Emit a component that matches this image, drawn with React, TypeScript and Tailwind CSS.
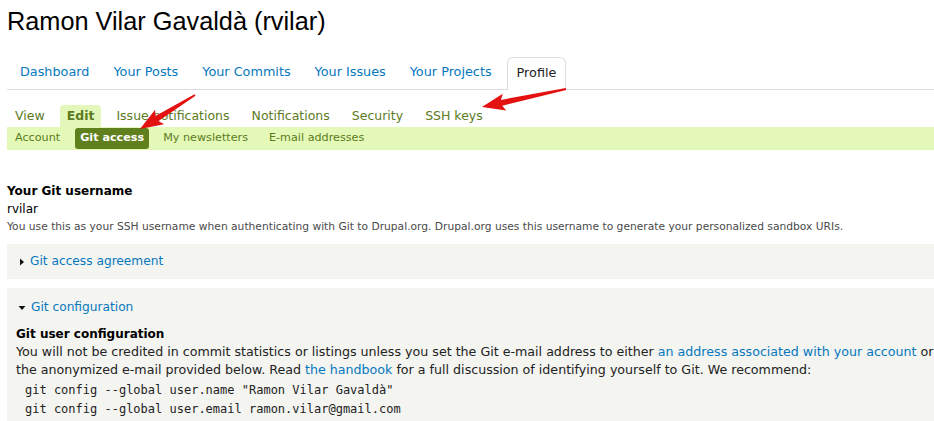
import React from "react";

const mainTabs = ["Dashboard", "Your Posts", "Your Commits", "Your Issues", "Your Projects"];
const subTabs = ["Issue notifications", "Notifications", "Security", "SSH keys"];
const subSubTabs = ["My newsletters", "E-mail addresses"];

// red annotation arrow: tapered shaft + head, from tail (x1,y1) to tip (x2,y2)
function arrowPoints(x1: number, y1: number, x2: number, y2: number) {
  const dx = x2 - x1;
  const dy = y2 - y1;
  const len = Math.hypot(dx, dy);
  const ux = dx / len;
  const uy = dy / len;
  const nx = -uy;
  const ny = ux;
  const headLen = 20;
  const headW = 8.5;
  const bx = x2 - ux * headLen;
  const by = y2 - uy * headLen;
  const pts = [
    [x1 + nx * 0.9, y1 + ny * 0.9],
    [bx + nx * 3, by + ny * 3],
    [bx + nx * headW - ux * 3, by + ny * headW - uy * 3],
    [x2, y2],
    [bx - nx * headW - ux * 3, by - ny * headW - uy * 3],
    [bx - nx * 3, by - ny * 3],
    [x1 - nx * 0.9, y1 - ny * 0.9],
  ];
  return pts.map((p) => p.join(",")).join(" ");
}

const App = () => {
  return (
    <div className="relative w-[934px] h-[421px] overflow-hidden bg-white pl-[7px] font-['DejaVu_Sans',sans-serif] text-[#222]">
      <h1 className="pt-[6px] text-[25.3px] leading-[30px] font-normal text-black font-['Liberation_Sans',Arial,sans-serif]">
        Ramon Vilar Gavaldà (rvilar)
      </h1>

      {/* primary tabs */}
      <ul className="mt-[21px] flex items-end gap-[6px] pl-[4px] border-b border-[#dcdcdc] text-[12.8px]">
        {mainTabs.map((t) => (
          <li key={t} className="h-[32px] flex items-center px-[9px] pb-[3px] text-[#0678be]">
            {t}
          </li>
        ))}
        <li className="h-[33px] -mb-px flex items-center px-[9px] pb-[3px] bg-white border border-b-0 border-[#dcdcdc] rounded-t-[6px] text-[#222]">
          Profile
        </li>
      </ul>

      {/* secondary tabs */}
      <ul className="mt-[15px] flex items-end gap-[8px] text-[12.5px] text-[#5b7b1c]">
        <li className="h-[22px] flex items-center ml-[1px] px-[7px]">View</li>
        <li className="h-[22px] flex items-center px-[7px] bg-[#e3f7bb] rounded-t-[4px] font-bold">Edit</li>
        {subTabs.map((t) => (
          <li key={t} className="h-[22px] flex items-center px-[7px]">
            {t}
          </li>
        ))}
      </ul>

      {/* tertiary tabs */}
      <ul className="h-[23px] flex items-center gap-[7px] bg-[#e4f9b7] text-[11.2px] text-[#5b7b1c]">
        <li className="px-[8px]">Account</li>
        <li className="h-[21px] flex items-center px-[5px] bg-[#5f801d] text-white font-bold rounded-[3px]">Git access</li>
        {subSubTabs.map((t) => (
          <li key={t} className="px-[7px]">
            {t}
          </li>
        ))}
      </ul>

      {/* username */}
      <div className="mt-[32px] leading-[18px]">
        <div className="text-[12px] font-bold text-black">Your Git username</div>
        <div className="text-[12px] text-black">rvilar</div>
        <div className="text-[10.7px] text-[#4a4a4a] whitespace-nowrap">
          You use this as your SSH username when authenticating with Git to Drupal.org. Drupal.org uses this username to generate your personalized sandbox URIs.
        </div>
      </div>

      {/* collapsed fieldset */}
      <div className="mt-[8px] bg-[#f4f4f1] py-[8px] pl-[12px] flex items-center gap-[5px] leading-[19px]">
        <svg width="6" height="8" viewBox="0 0 6 8" className="mt-[1px]">
          <path d="M1 0.5 L5 4 L1 7.5 Z" fill="#111" />
        </svg>
        <span className="text-[12.2px] text-[#0678be]">Git access agreement</span>
      </div>

      {/* expanded fieldset */}
      <div className="mt-[9px] bg-[#f4f4f1] pt-[10px] pl-[9px] h-[140px]">
        <div className="flex items-center gap-[5px] pl-[2px] leading-[18px]">
          <svg width="8" height="6" viewBox="0 0 8 6" className="mt-[2px]">
            <path d="M0.5 1 L7.5 1 L4 5 Z" fill="#111" />
          </svg>
          <span className="text-[12.2px] text-[#0678be]">Git configuration</span>
        </div>
        <div className="mt-[9px] leading-[18px] text-[12px] font-bold text-black">Git user configuration</div>
        <p className="leading-[18px] text-[12.65px] text-[#222] whitespace-nowrap">
          You will not be credited in commit statistics or listings unless you set the Git e-mail address to either{" "}
          <span className="text-[#0678be]">an address associated with your account</span> or
          <br />
          the anonymized e-mail provided below. Read <span className="text-[#0678be]">the handbook</span> for a full discussion of
          identifying yourself to Git. We recommend:
        </p>
        <div className="mt-[2px] pl-[9px] font-['DejaVu_Sans_Mono',monospace] text-[12px] leading-[19px] text-[#222] whitespace-pre">
          <div>git config --global user.name "Ramon Vilar Gavaldà"</div>
          <div>git config --global user.email ramon.vilar@gmail.com</div>
        </div>
      </div>

      {/* annotation arrows */}
      <svg className="absolute left-0 top-0 pointer-events-none" width="934" height="421">
        <polygon points={arrowPoints(195, 95, 140, 129)} fill="#e3110f" />
        <polygon points={arrowPoints(566, 89, 482, 107)} fill="#e3110f" />
      </svg>
    </div>
  );
};

export default App;
